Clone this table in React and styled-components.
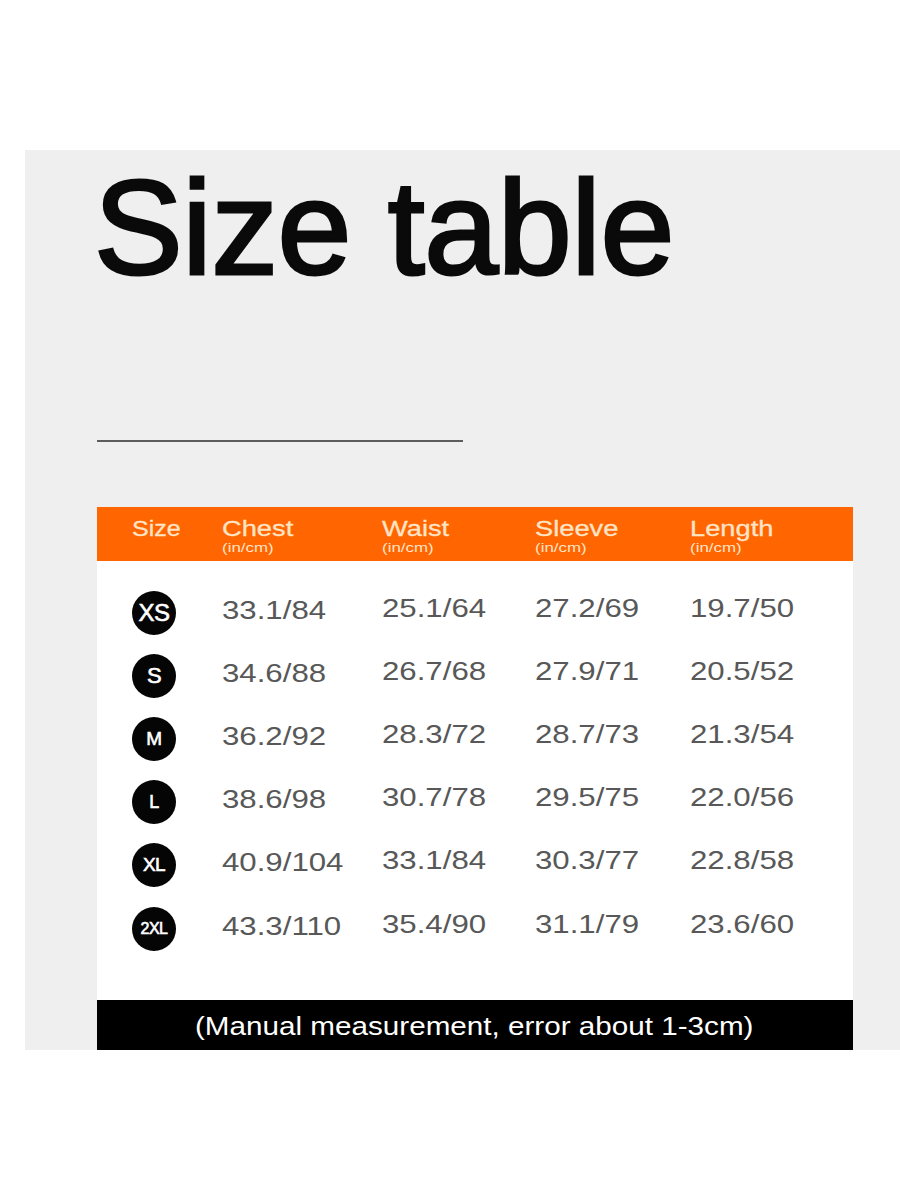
import styled, { createGlobalStyle } from 'styled-components'

const GlobalStyle = createGlobalStyle`
  body {
    margin: 0;
    background: #ffffff;
    font-family: "Liberation Sans", Arial, sans-serif;
  }
`

const Page = styled.div`
  width: 900px;
  height: 1200px;
  padding: 150px 0 0 25px;
  box-sizing: border-box;
`

const Panel = styled.div`
  width: 875px;
  background: #efefef;
  padding: 12px 47px 0 72px;
  box-sizing: border-box;
`

const Title = styled.h1`
  margin: 0 0 0 -3px;
  font-size: 133px;
  line-height: 1;
  font-weight: 400;
  letter-spacing: -0.4px;
  color: #0a0a0a;
  -webkit-text-stroke: 3px #0a0a0a;
`

const Rule = styled.div`
  width: 366px;
  height: 2px;
  background: #5c5c5c;
  margin-top: 145px;
`

const Table = styled.div`
  margin-top: 65px;
`

const Grid = styled.div`
  display: grid;
  grid-template-columns: 90px 160px 153px 155px 1fr;
  padding-left: 35px;
`

const Head = styled(Grid)`
  background: #ff6500;
  height: 54px;
  padding-top: 11px;
  box-sizing: border-box;
`

const HeadCell = styled.div`
  display: flex;
  flex-direction: column;
  align-items: flex-start;
  color: #ffe4c6;
`

const Wide = styled.span`
  display: inline-block;
  transform: scaleX(${p => p.$x || 1.2});
  transform-origin: left center;
  white-space: nowrap;
`

const HeadLabel = styled(Wide)`
  font-size: 22px;
  line-height: 22px;
  -webkit-text-stroke: 0.3px #ffe4c6;
`

const HeadUnit = styled(Wide)`
  font-size: 13px;
  line-height: 13px;
  margin-top: 1px;
`

const Body = styled.div`
  background: #ffffff;
  padding: 20px 0 40px;
`

const Row = styled(Grid)`
  height: 63.2px;
  align-items: center;
`

const Badge = styled.div`
  width: 44px;
  height: 44px;
  border-radius: 50%;
  background: #050505;
  color: #ffffff;
  display: flex;
  align-items: center;
  justify-content: center;
  font-size: ${p => p.$size}px;
  letter-spacing: -0.5px;
  -webkit-text-stroke: 0.6px #ffffff;
`

const Value = styled(Wide)`
  font-size: 26px;
  color: #585858;
  padding-bottom: ${p => (p.$low ? '5px' : '9px')};
`

const Footer = styled.div`
  background: #000000;
  height: 50px;
  display: flex;
  align-items: center;
  padding: 2px 0 0 98px;
  box-sizing: border-box;
`

const FooterText = styled(Wide)`
  color: #ffffff;
  font-size: 26px;
`

const columns = ['Chest', 'Waist', 'Sleeve', 'Length']

const rows = [
  ['XS', 24, '33.1/84', '25.1/64', '27.2/69', '19.7/50'],
  ['S', 22, '34.6/88', '26.7/68', '27.9/71', '20.5/52'],
  ['M', 19, '36.2/92', '28.3/72', '28.7/73', '21.3/54'],
  ['L', 18, '38.6/98', '30.7/78', '29.5/75', '22.0/56'],
  ['XL', 19, '40.9/104', '33.1/84', '30.3/77', '22.8/58'],
  ['2XL', 16, '43.3/110', '35.4/90', '31.1/79', '23.6/60'],
]

export default function App() {
  return (
    <Page>
      <GlobalStyle />
      <Panel>
        <Title>Size table</Title>
        <Rule />
        <Table>
          <Head>
            <HeadCell>
              <HeadLabel $x={1.14}>Size</HeadLabel>
            </HeadCell>
            {columns.map(c => (
              <HeadCell key={c}>
                <HeadLabel $x={1.24}>{c}</HeadLabel>
                <HeadUnit $x={1.3}>(in/cm)</HeadUnit>
              </HeadCell>
            ))}
          </Head>
          <Body>
            {rows.map(([size, fs, ...values]) => (
              <Row key={size}>
                <Badge $size={fs}>{size}</Badge>
                {values.map((v, i) => (
                  <div key={i}>
                    <Value $low={i === 0}>{v}</Value>
                  </div>
                ))}
              </Row>
            ))}
          </Body>
          <Footer>
            <FooterText $x={1.14}>(Manual measurement, error about 1-3cm)</FooterText>
          </Footer>
        </Table>
      </Panel>
    </Page>
  )
}
